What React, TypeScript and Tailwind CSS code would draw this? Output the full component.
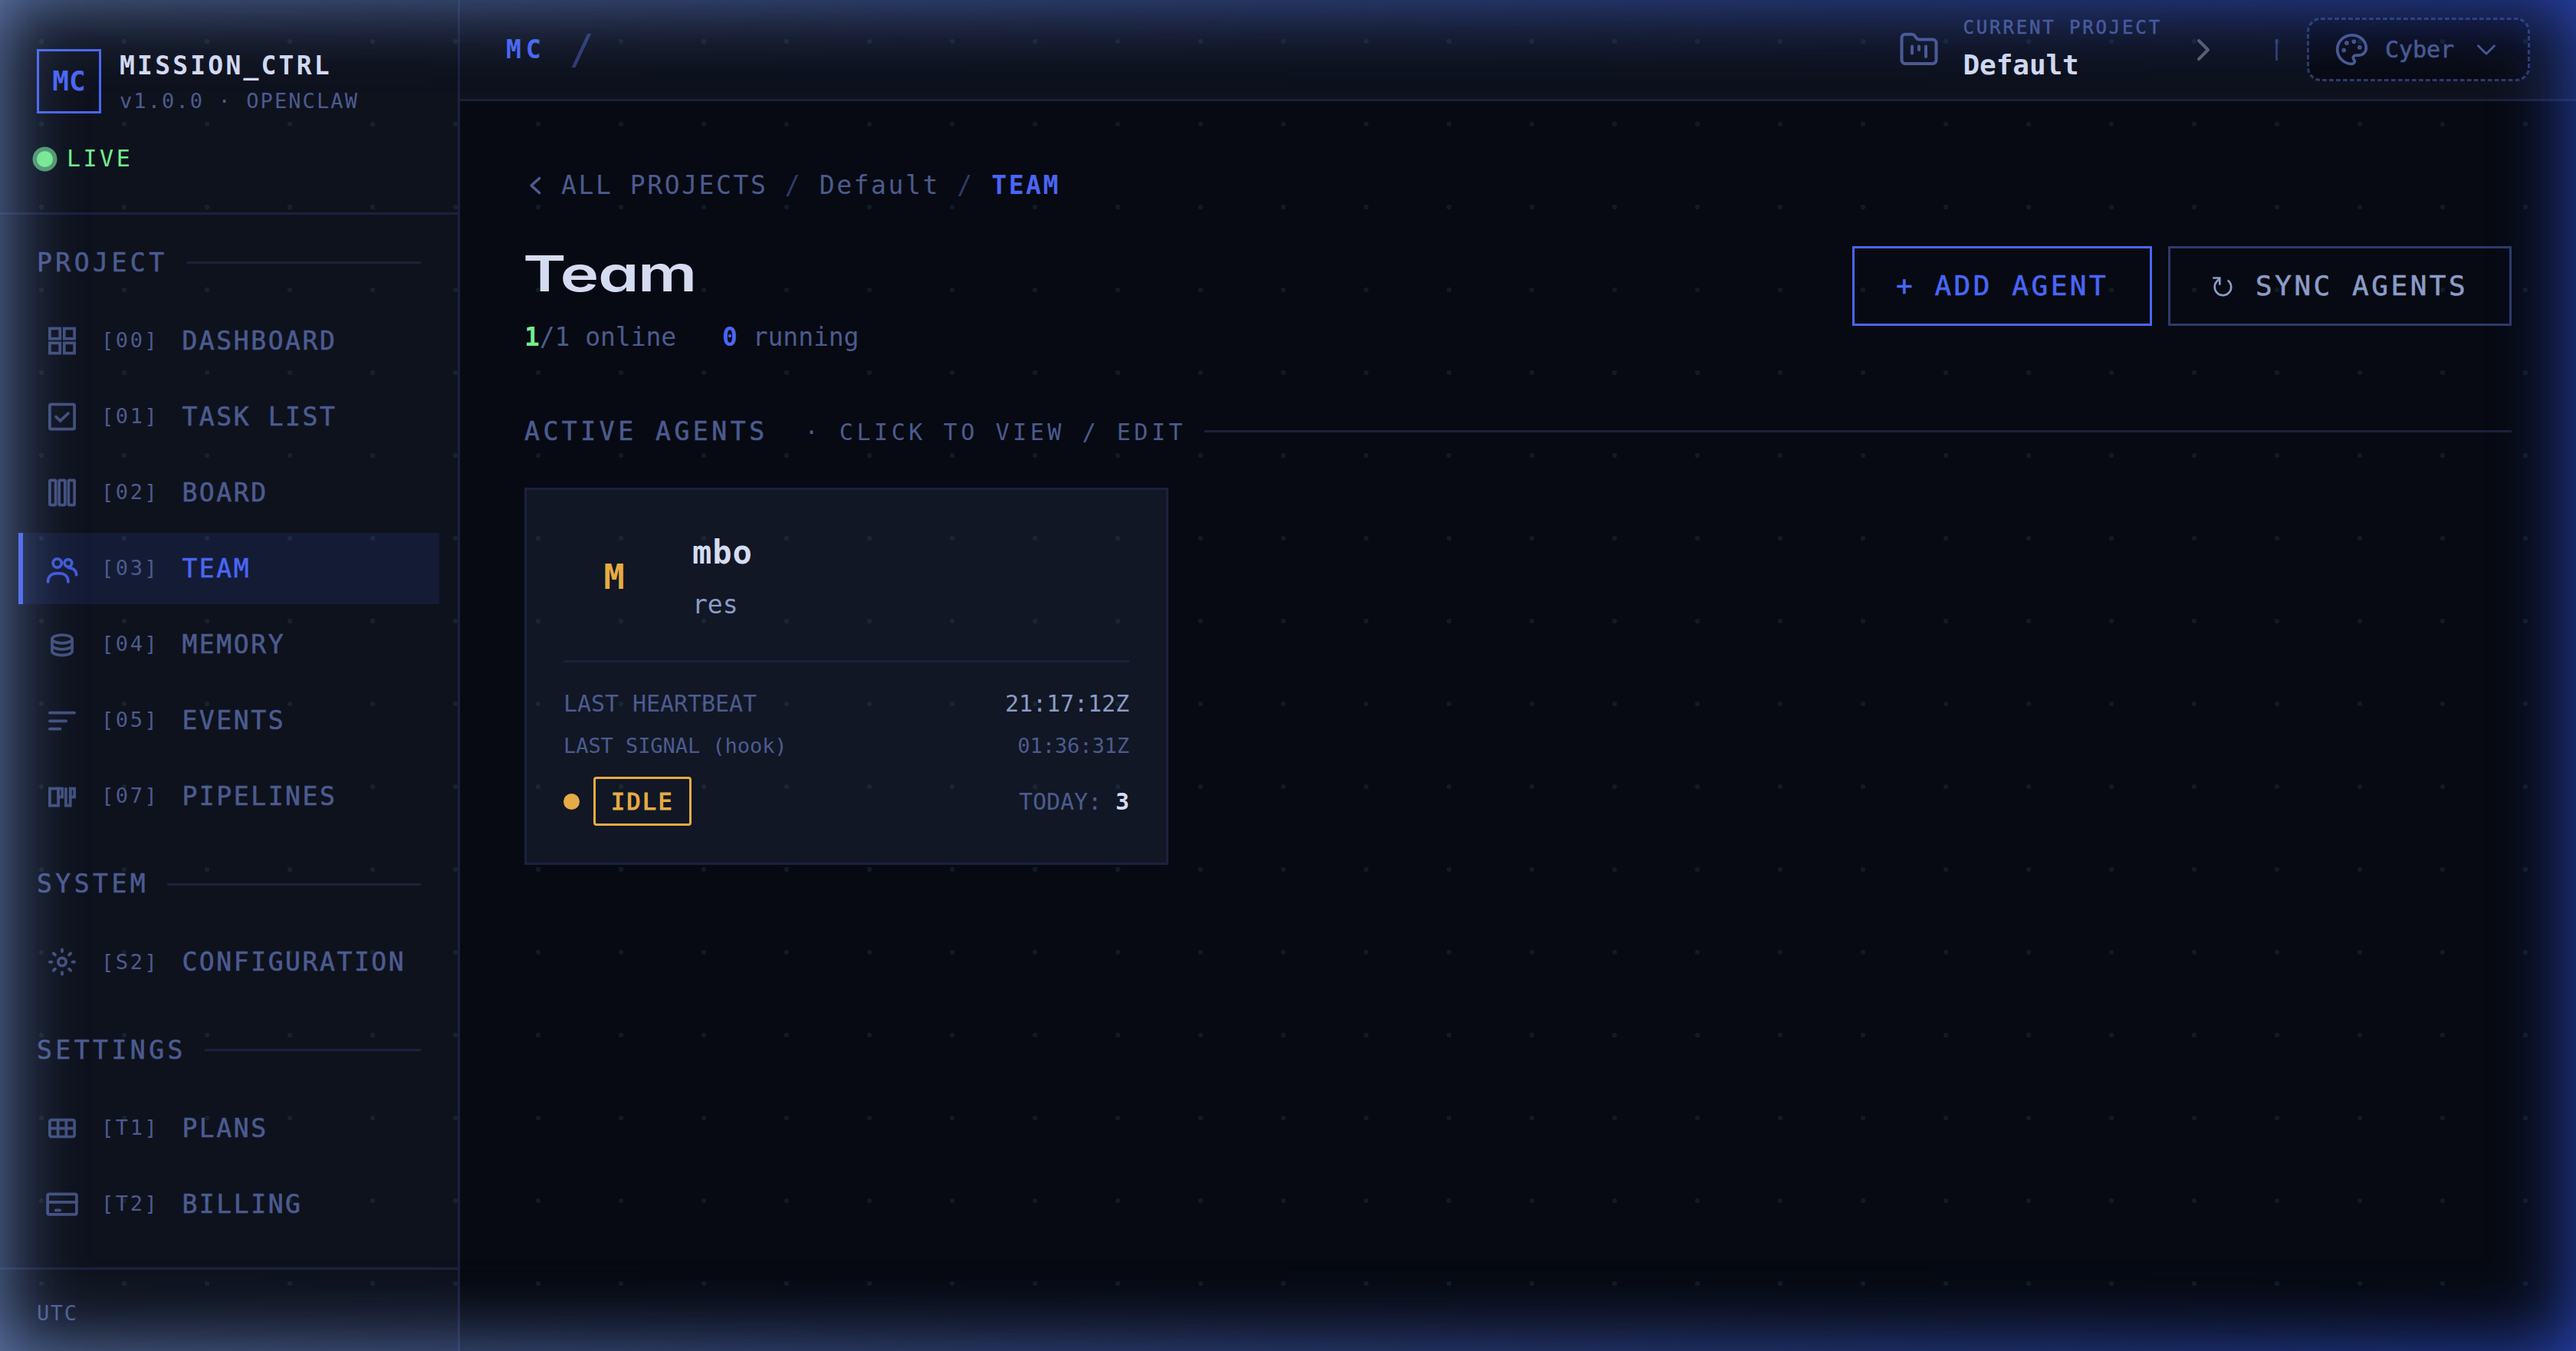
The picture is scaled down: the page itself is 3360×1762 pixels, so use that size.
import React from 'react';
import { ChevronDown, ChevronRight, FolderKanban, Palette } from 'lucide-react';

interface NavItem {
  code: string;
  label: string;
  icon: React.ReactNode;
  active?: boolean;
}

interface NavGroup {
  title: string;
  items: NavItem[];
}

const navGroups: NavGroup[] = [
  {
    title: 'PROJECT',
    items: [
      {
        code: '[00]',
        label: 'DASHBOARD',
        icon: (
          <>
            <rect x="2.1" y="1.9" width="5.7" height="5.7" />
            <rect x="10.200" y="1.9" width="5.7" height="5.7" />
            <rect x="2.1" y="10" width="5.7" height="5.7" />
            <rect x="10.200" y="10" width="5.7" height="5.7" />
          </>
        )
      },
      {
        code: '[01]',
        label: 'TASK LIST',
        icon: (
          <>
            <rect x="2.1" y="1.9" width="13.800" height="13.800" rx="0.8" />
            <path d="M5.600 8.800l2.400 2.300 4.400-4.200" />
          </>
        )
      },
      {
        code: '[02]',
        label: 'BOARD',
        icon: (
          <>
            <rect x="2.1" y="1.9" width="3.300" height="13.800" rx="0.5" />
            <rect x="7.350" y="1.9" width="3.300" height="13.800" rx="0.5" />
            <rect x="12.600" y="1.9" width="3.300" height="13.800" rx="0.5" />
          </>
        )
      },
      {
        code: '[03]',
        label: 'TEAM',
        active: true,
        icon: (
          <>
            <circle cx="6.300" cy="5.800" r="2.400" />
            <path d="M1.100 16.200c0-3 2-4.700 4.800-4.700h1.700c2.800 0 4.800 1.700 4.800 4.700" />
            <circle cx="12.400" cy="5.700" r="2.050" />
            <path d="M12.600 8.300c2.700.1 4.400 1.800 4.400 4" />
          </>
        )
      },
      {
        code: '[04]',
        label: 'MEMORY',
        icon: (
          <>
            <ellipse cx="9" cy="5.750" rx="5.600" ry="2.300" />
            <path d="M3.400 5.750v6.800c0 1.270 2.500 2.300 5.600 2.300s5.600-1.030 5.600-2.300v-6.800" />
            <path d="M3.400 9.200c0 1.270 2.500 2.300 5.600 2.300s5.600-1.030 5.600-2.300" />
          </>
        )
      },
      {
        code: '[05]',
        label: 'EVENTS',
        icon: <path d="M2.100 4.600h13.800M2.100 9.150h9.100M2.100 13.600h5.800" />
      },
      {
        code: '[07]',
        label: 'PIPELINES',
        icon: (
          <>
            <rect x="2.100" y="4.500" width="4.800" height="9.500" />
            <rect x="6.900" y="4.500" width="2.200" height="4.700" />
            <path d="M11.100 4.500V14h2.500V4.500" />
            <rect x="13.600" y="4.500" width="2.300" height="4.700" />
          </>
        )
      }
    ]
  },
  {
    title: 'SYSTEM',
    items: [
      {
        code: '[S2]',
        label: 'CONFIGURATION',
        icon: (
          <>
            <circle cx="9" cy="8.800" r="2.200" />
            <path d="M9 1.900v1.100M9 14.600v1.100M2.100 8.800h1.100M14.800 8.800h1.100M4.200 4l.900.900M12.900 12.700l.9.900M4.200 13.600l.9-.9M12.900 4.900l.9-.9" />
          </>
        )
      }
    ]
  },
  {
    title: 'SETTINGS',
    items: [
      {
        code: '[T1]',
        label: 'PLANS',
        icon: (
          <>
            <rect x="2.100" y="4.100" width="13.800" height="9.400" rx="1" />
            <path d="M2.100 8.800h13.800M6.700 4.100v9.400M11.300 4.100v9.400" />
          </>
        )
      },
      {
        code: '[T2]',
        label: 'BILLING',
        icon: (
          <>
            <rect x="0.900" y="3.200" width="16.200" height="11.300" rx="0.900" />
            <path d="M0.900 7.650h16.200M5.500 12.200h2.300" />
          </>
        )
      }
    ]
  }
];

const Sidebar: React.FC = () => (
  <aside className="flex w-[600px] shrink-0 flex-col border-r-[3px] border-[#1b213c] bg-[#0e121d]">
    <div className="h-[280px] shrink-0 border-b-[3px] border-[#1b213c] px-12 pt-16">
      <div className="flex h-[84px] gap-6">
        <div className="flex size-[84px] items-center justify-center border-[3px] border-[#4a66f5] text-[36px] font-bold text-[#4a66f5]">
          MC
        </div>
        <div className="whitespace-nowrap">
          <div className="text-[33px] leading-[44px] font-bold tracking-[3.200px] text-[#d5dcf2]">MISSION_CTRL</div>
          <div className="mt-1 text-[27px] leading-[40px] tracking-[2.100px] text-[#4c5b8f]">v1.0.0 · OPENCLAW</div>
        </div>
      </div>
      <div className="mt-[38px] flex items-center gap-[18px] text-[30px] leading-[42px] tracking-[3.500px] text-[#73ef8c]">
        <span className="size-[21px] rounded-full bg-[#7bf092] ring-[5.500px] ring-[#529c6c]" />
        LIVE
      </div>
    </div>

    <nav className="flex flex-1 flex-col gap-[43.500px] px-6 pt-[38px]">
      {navGroups.map((group) => (
        <div key={group.title}>
          <div className="mb-[31px] flex h-[49px] items-center gap-6 px-6 text-[33px] tracking-[4.500px] text-[#4c5b8f] [-webkit-text-stroke:0.6px]">
            {group.title}
            <span className="h-[3px] flex-1 bg-[#1b213c]" />
          </div>
          <div className="flex flex-col gap-1.5">
            {group.items.map((item) => (
              <div
                key={item.code}
                className={`flex h-[93px] items-center gap-[30px] border-l-[6px] pl-[30px] whitespace-nowrap ${
                  item.active ? 'border-[#4a66f5] bg-[#141b35] text-[#4a66f5]' : 'border-transparent text-[#4c5b8f]'
                }`}
              >
                <svg
                  viewBox="0 0 18 18"
                  className="size-[42px] shrink-0 overflow-visible opacity-85"
                  fill="none"
                  stroke="currentColor"
                  strokeWidth="1.6"
                  strokeLinecap="round"
                >
                  {item.icon}
                </svg>
                <span className="text-[27px] tracking-[2.600px] text-[#4c5b8f]">{item.code}</span>
                <span className="text-[33px] tracking-[2.580px] [-webkit-text-stroke:0.6px]">{item.label}</span>
              </div>
            ))}
          </div>
        </div>
      ))}
    </nav>

    <div className="flex h-[109px] shrink-0 items-center border-t-[3px] border-[#1b213c] px-12 pt-2 text-[27px] tracking-[1.600px] text-[#4c5b8f]">
      UTC
    </div>
  </aside>
);

const TopBar: React.FC = () => (
  <header className="flex h-[132px] shrink-0 items-center justify-between border-b-[3px] border-[#1b213c] bg-[#0e121d] px-[60px]">
    <div className="flex items-center">
      <span className="text-[33px] font-bold tracking-[6px] text-[#4a66f5]">MC</span>
      <span className="ml-[31px] text-[54px] leading-none text-[#2e3b6b]">/</span>
    </div>

    <div className="flex items-center">
      <FolderKanban size={54} strokeWidth={1.8} className="text-[#4c5b8f]" />
      <div className="ml-[30px] whitespace-nowrap">
        <div className="text-[24px] leading-[36px] tracking-[2.850px] text-[#4c5b8f] [-webkit-text-stroke:0.5px]">CURRENT PROJECT</div>
        <div className="mt-1 text-[36px] leading-[54px] font-bold tracking-[-0.070px] text-[#d5dcf2]">Default</div>
      </div>
      <ChevronRight size={48} strokeWidth={2} className="ml-[30px] text-[#5b6070]" />
      <span className="ml-[70px] h-7 w-[3px] bg-[#2e3b6b]" />
      <div className="ml-[38px] flex h-[83px] items-center gap-[21px] rounded-[18px] border-[3px] border-dashed border-[#2e3b6b] bg-[#090b13] px-[33px] text-[30px] text-[#4c5b8f]">
        <Palette size={45} strokeWidth={2} />
        <span className="tracking-[-0.060px] [-webkit-text-stroke:0.6px]">Cyber</span>
        <ChevronDown size={42} strokeWidth={1.600} />
      </div>
    </div>
  </header>
);

const Breadcrumb: React.FC = () => (
  <div className="flex h-[50px] items-center gap-[18px] text-[33px] tracking-[2.580px] whitespace-pre text-[#4c5b8f]">
    <svg
      viewBox="0 0 30 30"
      className="size-[30px]"
      fill="none"
      stroke="currentColor"
      strokeWidth="3.6"
      strokeLinecap="round"
      strokeLinejoin="round"
    >
      <path d="M19.500 5.500L9 15l10.500 9.500" />
    </svg>
    <span>
      ALL PROJECTS<span className="text-[#2e3b6b]"> / </span>Default<span className="text-[#2e3b6b]"> / </span>
      <span className="font-bold text-[#4a66f5]">TEAM</span>
    </span>
  </div>
);

const AgentCard: React.FC = () => (
  <div className="h-[492px] w-[840px] border-[3px] border-[#1b213c] bg-[#111724] px-12 pt-12 whitespace-nowrap">
    <div className="flex gap-9 border-b-[3px] border-[#1b213c] pb-[42px]">
      <div className="flex size-[132px] items-center justify-center text-[45px] font-bold text-[#e5ac45]">M</div>
      <div>
        <div className="mt-1.5 text-[42px] leading-[56px] font-bold tracking-[1px] text-[#d5dcf2]">mbo</div>
        <div className="mt-4 text-[33px] leading-[48px] text-[#8b9cc7]">res</div>
      </div>
    </div>
    <div className="mt-[31px] flex h-[45px] items-center justify-between text-[30px] tracking-[-0.060px] text-[#4c5b8f]">
      <span>LAST HEARTBEAT</span>
      <span className="text-[#8b9cc7]">21:17:12Z</span>
    </div>
    <div className="mt-3 flex h-[43px] items-center justify-between text-[27px] tracking-[-0.060px] text-[#4c5b8f]">
      <span>LAST SIGNAL (hook)</span>
      <span>01:36:31Z</span>
    </div>
    <div className="mt-[18px] flex h-16 items-center justify-between text-[30px] tracking-[-0.060px] text-[#4c5b8f]">
      <div className="flex items-center gap-[18px]">
        <span className="size-[21px] rounded-full bg-[#e5ac45]" />
        <span className="flex h-16 items-center rounded-[4px] border-[3px] border-[#e5ac45] px-5 tracking-[2.400px] text-[#e5ac45] [-webkit-text-stroke:1.2px]">
          IDLE
        </span>
      </div>
      <span>
        TODAY: <span className="font-bold text-[#d5dcf2]">3</span>
      </span>
    </div>
  </div>
);

const TeamPage: React.FC = () => (
  <main className="flex-1 px-[84px] pt-[85px]">
    <Breadcrumb />
    <div className="mt-[54px] flex items-start justify-between">
      <div>
        <h1 className="-ml-0.5 origin-left scale-x-[1.34] font-['Inter'] text-[64px] leading-[72px] font-semibold tracking-[-1px] text-[#d5dcf2] [font-feature-settings:'cv11']">
          Team
        </h1>
        <div className="mt-[22px] flex gap-[60px] text-[33px] leading-[50px] tracking-[-0.060px] text-[#4c5b8f]">
          <span>
            <span className="font-bold text-[#73ef8c]">1</span>/1 online
          </span>
          <span>
            <span className="font-bold text-[#4a66f5]">0</span> running
          </span>
        </div>
      </div>
      <div className="flex gap-[21px] text-[36px] tracking-[3.530px] whitespace-nowrap [-webkit-text-stroke:0.6px]">
        <button className="flex h-[104px] w-[391px] items-center border-[3px] border-[#4a66f5] pl-[54px] text-[#4a66f5]">
          + ADD AGENT
        </button>
        <button className="flex h-[104px] w-[448px] items-center border-[3px] border-[#2e3b6b] pl-[54px] text-[#8b9cc7]">
          <svg viewBox="0 0 32 32" className="size-8" fill="none" stroke="currentColor" strokeWidth="2.6">
            <path d="M20.700 8.500A10.800 10.800 0 1 1 7 9.500L10.300 5.500M1.200 5.500h9.100v9.200" />
          </svg>
          <span className="ml-[25px]">SYNC AGENTS</span>
        </button>
      </div>
    </div>

    <div className="mt-[72.500px] mb-[48.500px] flex h-[50px] items-center gap-6 text-[33px] tracking-[4.560px] whitespace-nowrap text-[#4c5b8f]">
      <span>
        <span className="[-webkit-text-stroke:0.6px]">ACTIVE AGENTS</span>
        <span className="ml-12 text-[30px]">· CLICK TO VIEW / EDIT</span>
      </span>
      <span className="h-[3px] flex-1 bg-[#1b213c]" />
    </div>

    <AgentCard />
  </main>
);

export default function App() {
  return (
    <div className="relative flex h-[1762px] w-[3360px] overflow-hidden bg-[#070a12] font-['DejaVu_Sans_Mono',monospace]">
      <Sidebar />
      <div className="flex flex-1 flex-col">
        <TopBar />
        <TeamPage />
      </div>

      {/* Dot grid */}
      <div className="pointer-events-none absolute inset-0 bg-[radial-gradient(circle,rgba(70,150,170,0.12)_3px,transparent_3px)] bg-[length:108px_108px]" />

      {/* Edge glow, greyer on the left and bluer on the right */}
      <div className="pointer-events-none absolute inset-0 mask-r-from-0% mask-r-to-100% shadow-[inset_0_0_100px_rgba(125,158,222,0.8)]" />
      <div className="pointer-events-none absolute inset-0 mask-l-from-0% mask-l-to-100% shadow-[inset_0_0_100px_rgba(48,82,220,0.85)]" />
    </div>
  );
}
